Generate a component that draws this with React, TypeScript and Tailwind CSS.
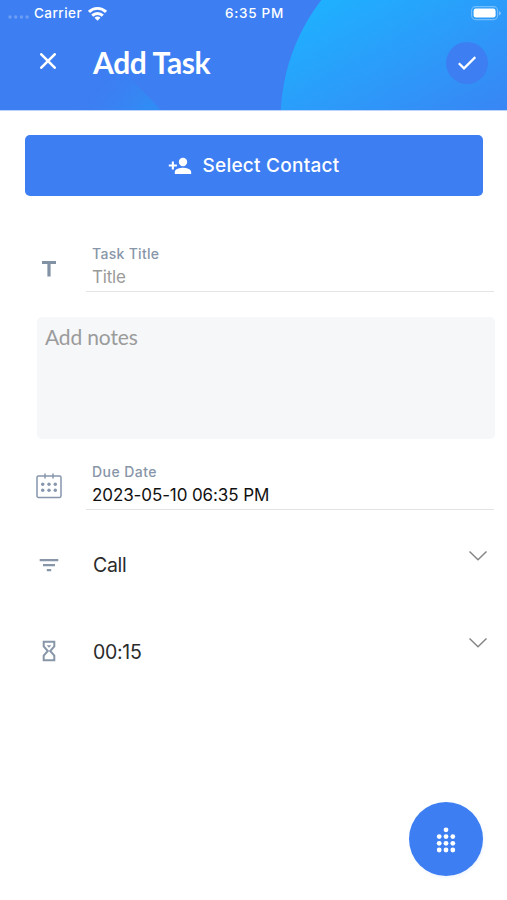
import React from "react";

const sans = "font-['Inter','Liberation_Sans',sans-serif]";
const lato = "font-['Lato','Liberation_Sans',sans-serif]";

function HeaderArt() {
  return (
    <svg className="absolute inset-0" width="507" height="110" viewBox="0 0 507 110" aria-hidden="true">
      <defs>
        <linearGradient id="disc" gradientUnits="userSpaceOnUse" x1="325" y1="0" x2="430" y2="190">
          <stop offset="0" stopColor="#1fb0ff" />
          <stop offset="1" stopColor="#3d7ef2" />
        </linearGradient>
        <linearGradient id="peak" gradientUnits="userSpaceOnUse" x1="142" y1="112" x2="95" y2="75">
          <stop offset="0" stopColor="#318bf5" />
          <stop offset="1" stopColor="#3d7ef2" stopOpacity="0" />
        </linearGradient>
      </defs>
      <path d="M50 110 L112 70 Q122 68 130 78 L161 110Z" fill="url(#peak)" />
      <circle cx="477" cy="120" r="196.500" fill="url(#disc)" />
    </svg>
  );
}

function StatusBar() {
  return (
    <div className={`${sans} relative flex h-[26px] items-center justify-between pl-[8px] pr-[6px] text-[13px] font-medium text-white`}>
      <div className="flex w-[170px] items-center">
        <svg width="22" height="6" viewBox="0 0 22 6" className="mt-[7px]" fill="#fff" fillOpacity=".25">
          <circle cx="2" cy="3" r="1.7" />
          <circle cx="7.7" cy="3" r="1.7" />
          <circle cx="13.4" cy="3" r="1.7" />
          <circle cx="19.1" cy="3" r="1.7" />
        </svg>
        <span className="ml-[4px] mt-[1px] w-[48px] text-[13.500px] tracking-[0.45px]">Carrier</span>
        <svg width="19" height="15" viewBox="0 0 19 15" className="ml-[6px]" fill="none" stroke="#fff" strokeWidth="2.9">
          <path d="M1 5.9a12.1 12.1 0 0 1 17 0" />
          <path d="M4.2 9.600a7.6 7.6 0 0 1 10.600 0" />
          <path d="M9.500 14.800 6.500 11.700a4.200 4.200 0 0 1 6 0Z" fill="#fff" stroke="none" />
        </svg>
      </div>
      <span className="mt-[1px] text-[13.500px] tracking-[0.7px]">6:35 PM</span>
      <div className="flex w-[170px] justify-end">
        <svg width="30" height="15" viewBox="0 0 30 15">
          <rect x=".6" y=".6" width="26" height="13" rx="4" fill="none" stroke="#fff" strokeOpacity=".35" strokeWidth="1.1" />
          <rect x="2.6" y="2.6" width="22" height="9" rx="2.3" fill="#fff" />
          <path d="M28.2 5v4.4q1.5-.7 1.5-2.2T28.2 5Z" fill="#fff" fillOpacity=".5" />
        </svg>
      </div>
    </div>
  );
}

function Chevron() {
  return (
    <svg width="20" height="12" viewBox="0 0 20 12" fill="none" stroke="#858585" strokeWidth="1.5">
      <path d="M1.5 1.5 10 9.7l8.5-8.2" />
    </svg>
  );
}

function FilterIcon() {
  return (
    <svg width="20" height="14" viewBox="0 0 20 14" fill="#8796a8">
      <path d="M.7 1h18.6v2.200H.7zM4 6h12v2.200H4zM7.800 11h4.400v2.200H7.800z" />
    </svg>
  );
}

function HourglassIcon() {
  return (
    <svg width="14" height="22" viewBox="0 0 14 22" fill="none" stroke="#8796a8" strokeWidth="2" className="mb-[2px]">
      <path d="M1.7 1.7h10.6v4.6L8.2 11l4.1 4.7v4.6H1.7v-4.6L5.8 11 1.7 6.3Z" />
      <path d="M4.7 5.2h4.6L7 7.8Z" fill="#8796a8" stroke="none" />
    </svg>
  );
}

function CalendarIcon() {
  return (
    <svg width="26" height="26" viewBox="0 0 26 26" fill="none" stroke="#8796ad" strokeWidth="1.5">
      <rect x="1" y="3" width="24" height="21.5" rx="1.4" />
      <path d="M9 .5v5M17 .5v5" />
      <g fill="#8796ad" stroke="none">
        <circle cx="6.7" cy="11.3" r="1.7" />
        <circle cx="13" cy="11.3" r="1.7" />
        <circle cx="19.3" cy="11.3" r="1.7" />
        <circle cx="6.7" cy="17.3" r="1.7" />
        <circle cx="13" cy="17.3" r="1.7" />
        <circle cx="19.3" cy="17.3" r="1.7" />
      </g>
    </svg>
  );
}

function PickerRow({ icon, label }: { icon: React.ReactNode; label: string }) {
  return (
    <div className="flex h-[87px] items-center pr-[19px]">
      <span className="flex w-[97px] shrink-0 justify-center">{icon}</span>
      <span className="-ml-[4px] mt-[2px] grow text-[19.5px] tracking-[-0.3px] text-[#2b2b2b]">{label}</span>
      <span className="mb-[18px]">
        <Chevron />
      </span>
    </div>
  );
}

export default function App() {
  return (
    <div className={`${sans} flex h-[900px] w-[507px] flex-col overflow-hidden bg-white`}>
      <header className="relative h-[111px] shrink-0 overflow-hidden border-b border-[#bcd3fb] bg-[#3d7ef2]">
        <HeaderArt />
        <StatusBar />
        <div className="relative flex h-[73px] items-center pl-[40px] pr-[19px]">
          <svg width="16" height="16" viewBox="0 0 16 16" fill="none" stroke="#fff" strokeWidth="2.6" strokeLinecap="round" className="mb-[3px]">
            <path d="m1.300 1.300 13.400 13.400M14.700 1.300 1.300 14.700" />
          </svg>
          <h1 className={`${lato} -mt-[1px] ml-[37px] grow text-[30px] font-bold leading-none tracking-[-0.350px] text-white`}>Add Task</h1>
          <button className="flex size-[42px] items-center justify-center rounded-full bg-[#3d7ef2]">
            <svg width="20" height="16" viewBox="0 0 20 16" fill="none" stroke="#fff" strokeWidth="2.2">
              <path d="m1.8 8.2 5.2 5.2L18.3 2.1" />
            </svg>
          </button>
        </div>
      </header>

      <button className="ml-[25px] mt-[24px] flex h-[61px] w-[458px] shrink-0 items-center justify-center rounded-[5px] bg-[#3d7ef2] text-white">
        <svg width="24" height="18" viewBox="0 0 24 18" fill="#fff">
          <circle cx="15" cy="5" r="4.2" />
          <path d="M6.8 17v-2c0-3 5.2-4.3 8.2-4.3s8.2 1.3 8.2 4.3v2ZM3.8 4.5h2.1v3h3v2.1h-3v3H3.8v-3h-3V7.500h3z" />
        </svg>
        <span className="ml-[10px] mt-[2px] text-[19px] font-medium tracking-[0.250px]">Select Contact</span>
      </button>

      <div className="mt-[48px] flex h-[48px] shrink-0">
        <div className="w-[86px] pl-[42px] pt-[17px]">
          <svg width="14" height="16" viewBox="0 0 14 16" fill="#8292a5">
            <path d="M0 0h14v3H8.600v12.500H5.400V3H0z" />
          </svg>
        </div>
        <div className="flex w-[408px] flex-col border-b border-[#e4e4e6] pl-[6px]">
          <span className="text-[14px] font-medium leading-[20px] tracking-[0.3px] text-[#8796a8]">Task Title</span>
          <span className="mt-[2px] text-[17px] leading-[23px] tracking-[-0.2px] text-[#9a9a9a]">Title</span>
        </div>
      </div>

      <div className={`${lato} ml-[37px] mt-[25px] h-[122px] w-[458px] shrink-0 rounded-[5px] bg-[#f5f7f9] px-[8px] pt-[6px] text-[21px] leading-[28px] tracking-[-0.150px] text-[#9b9b9b]`}>
        Add notes
      </div>

      <div className="mt-[23px] flex h-[48px] shrink-0">
        <div className="w-[86px] pl-[36px] pt-[11px]">
          <CalendarIcon />
        </div>
        <div className="flex w-[408px] flex-col border-b border-[#e4e4e6] pl-[6px]">
          <span className="text-[14px] font-medium leading-[20px] tracking-[0.45px] text-[#8796a8]">Due Date</span>
          <span className="mt-[2px] text-[17px] leading-[23px] tracking-[-0.1px] text-[#111]">2023-05-10 06:35 PM</span>
        </div>
      </div>

      <div className="mt-[11px] shrink-0">
        <PickerRow icon={<FilterIcon />} label="Call" />
        <PickerRow icon={<HourglassIcon />} label="00:15" />
      </div>

      <div className="mb-[24px] mr-[24px] mt-auto flex justify-end">
        <button className="flex size-[74px] items-center justify-center rounded-full bg-[#3d7ef2] shadow-[1px_2px_3px_rgba(61,126,242,0.08)]">
          <svg width="20" height="26" viewBox="0 0 20 26" fill="#fff" className="mt-[1px]">
            <circle cx="10" cy="2.8" r="2.4" />
            {[9.6, 16.3, 23].map((y) => (
              <g key={y}>
                <circle cx="3.2" cy={y} r="2.4" />
                <circle cx="10" cy={y} r="2.4" />
                <circle cx="16.800" cy={y} r="2.4" />
              </g>
            ))}
          </svg>
        </button>
      </div>
    </div>
  );
}
